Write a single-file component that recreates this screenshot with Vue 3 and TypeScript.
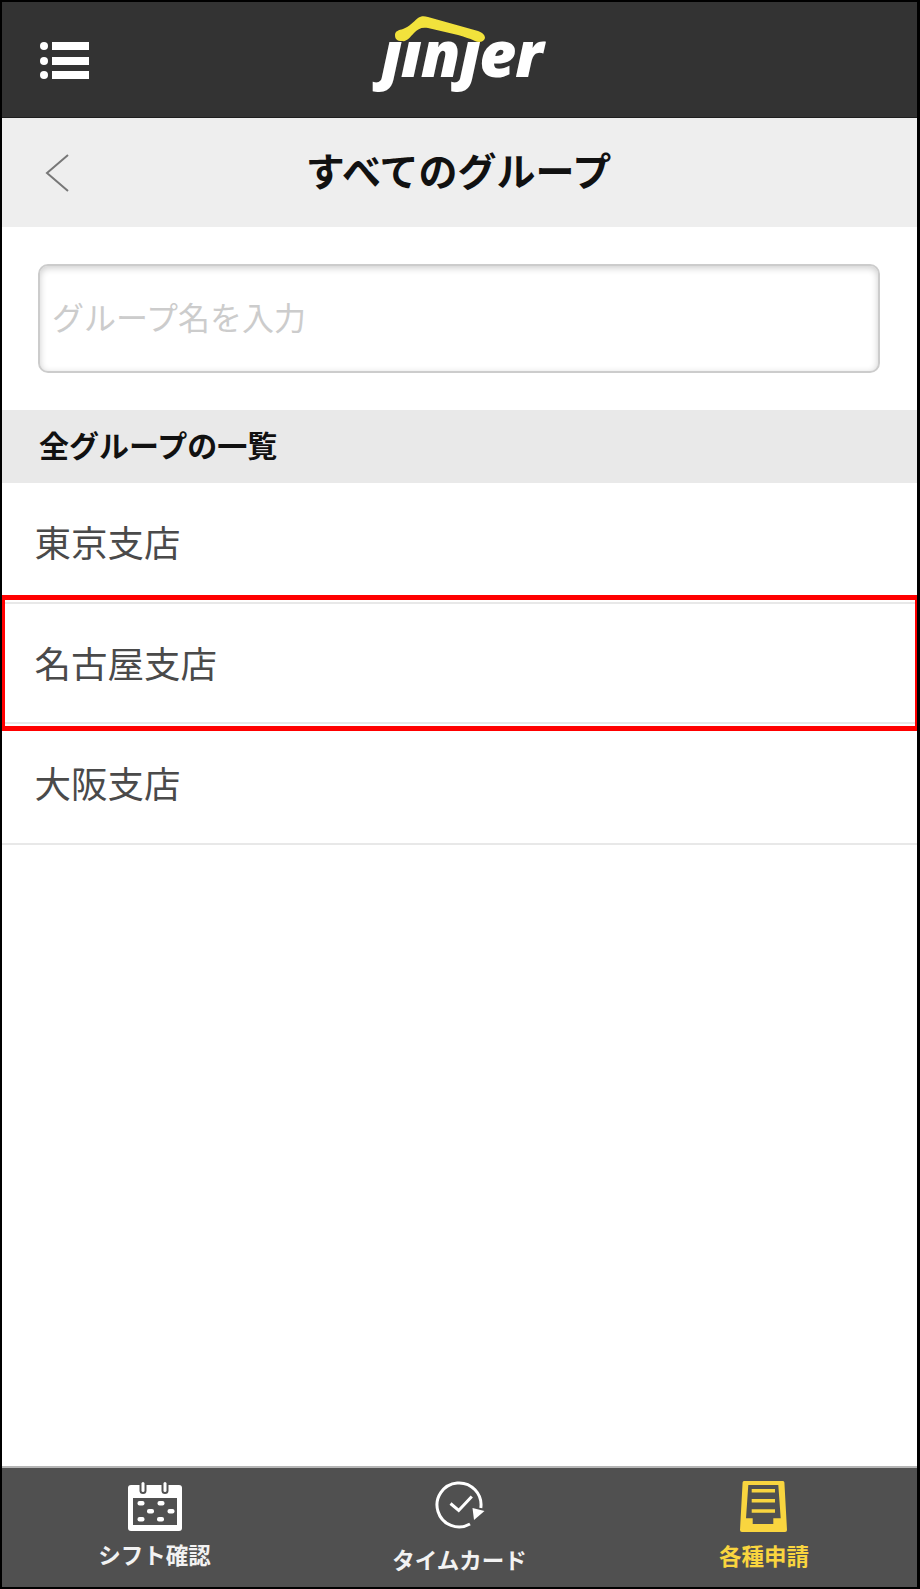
<script setup lang="ts">
const groups: string[] = ['東京支店', '名古屋支店', '大阪支店']
</script>

<template>
  <div class="screen">
    <header class="topbar">
      <div class="menu">
        <div v-for="n in 3" :key="n" class="menu-row"><i class="dot"></i><i class="bar"></i></div>
      </div>
      <div class="logo">
        <svg class="arch" width="92" height="28" viewBox="0 0 92 28">
          <path d="M1 20C1 16 5 15 9 14C15 12 19 7 24 3C27 1 30 1 34 2L84 16C89 18 91 20 91 23C90 27 85 28 81 26C75 23 70 22 64 20L34 13C27 12 24 14 20 18C16 22 13 27 8 26C3 26 1 24 1 20Z" fill="#f2e23c"/>
        </svg>
        <span class="logo-text">ȷınȷer</span>
      </div>
    </header>

    <div class="titlebar">
      <svg class="back" width="26" height="40" viewBox="0 0 26 40">
        <path d="M24 2L3 20L24 38" fill="none" stroke="#777" stroke-width="2"/>
      </svg>
      <h1 class="title">すべてのグループ</h1>
    </div>

    <div class="search">
      <input class="search-input" type="text" placeholder="グループ名を入力" />
    </div>

    <div class="section">全グループの一覧</div>

    <ul class="list">
      <li v-for="g in groups" :key="g" class="row">{{ g }}</li>
    </ul>

    <nav class="tabs">
      <div class="tab">
        <svg width="54" height="50" viewBox="0 0 54 50">
          <rect x="0" y="3" width="54" height="46" rx="3" fill="#fff"/>
          <rect x="5" y="16" width="44" height="27" fill="#505050"/>
          <rect x="11.5" y="0" width="7" height="12" rx="3.5" fill="#505050"/>
          <rect x="33.5" y="0" width="7" height="12" rx="3.5" fill="#505050"/>
          <rect x="13.5" y="0" width="3" height="10" rx="1.5" fill="#fff"/>
          <rect x="35.5" y="0" width="3" height="10" rx="1.5" fill="#fff"/>
          <g fill="#fff">
            <rect x="9.5" y="19" width="7" height="4.5" rx="2"/>
            <rect x="29.5" y="19" width="7" height="4.5" rx="2"/>
            <rect x="19" y="27" width="7" height="4.5" rx="2"/>
            <rect x="39.5" y="27" width="7" height="4.5" rx="2"/>
            <rect x="9.5" y="35" width="7" height="4.5" rx="2"/>
            <rect x="29" y="35" width="7" height="4.5" rx="2"/>
          </g>
        </svg>
        <span class="tab-label">シフト確認</span>
      </div>
      <div class="tab tab-low">
        <svg width="52" height="50" viewBox="0 0 52 50">
          <path d="M36 44A22 22 0 1 1 46.8 28" fill="none" stroke="#fff" stroke-width="3"/>
          <path d="M38.500 28L50.500 31L40 40Z" fill="#fff"/>
          <path d="M16.500 23.500L24.700 30.500L37.800 16.500" fill="none" stroke="#fff" stroke-width="3"/>
        </svg>
        <span class="tab-label">タイムカード</span>
      </div>
      <div class="tab tab-active">
        <svg width="47" height="52" viewBox="0 0 47 52">
          <path fill-rule="evenodd" fill="#f9d53f" d="M4 0H43Q44.300 0 44.400 1.500L47 49Q47 51 45 51H2Q0 51 0 49L2.600 1.500Q2.700 0 4 0ZM8.300 4L6 37.300H12.700V43H33.300V37.300H40.700L38.300 4Z"/>
          <path d="M11.700 9.700H35M11.700 19.700H35M11.700 30H35" stroke="#f9d53f" stroke-width="3.500" fill="none"/>
        </svg>
        <span class="tab-label">各種申請</span>
      </div>
    </nav>

    <div class="highlight"></div>
  </div>
</template>

<style>
html, body { margin: 0; background: #fff; }
</style>

<style scoped>
.screen {
  position: relative;
  width: 920px;
  height: 1589px;
  box-sizing: border-box;
  border: solid #000;
  border-width: 2px 3px 2px 2px;
  display: flex;
  flex-direction: column;
  background: #fff;
  overflow: hidden;
  font-family: "Noto Sans CJK JP", "Noto Sans", sans-serif;
}
.topbar {
  height: 115px;
  flex: none;
  background: #333;
  border-bottom: 1px solid #1e1e1e;
  display: flex;
  align-items: flex-start;
  box-sizing: content-box;
}
.menu {
  margin: 40px 0 0 38px;
  display: flex;
  flex-direction: column;
  gap: 6.500px;
}
.menu-row { display: flex; align-items: center; gap: 4px; height: 8px; }
.dot { width: 8px; height: 8px; border-radius: 50%; background: #fff; }
.bar { width: 37px; height: 8px; background: #fff; }
.logo {
  position: relative;
  margin: 13px 0 0 284px;
  width: 176px;
  height: 80px;
}
.arch { position: absolute; left: 21px; top: 0; }
.logo-text {
  position: absolute;
  left: 8px;
  top: -7px;
  font-family: "Open Sans", sans-serif;
  font-style: italic;
  font-weight: 800;
  font-size: 64px;
  line-height: 90px;
  color: #fff;
  letter-spacing: -1px;
}
.titlebar {
  height: 109px;
  flex: none;
  background: #eee;
  position: relative;
  display: flex;
  align-items: center;
  justify-content: center;
}
.back { position: absolute; left: 42px; top: 35px; }
.title {
  margin: 0 0 6px -2px;
  font-size: 39px;
  font-weight: 700;
  color: #111;
  line-height: 1;
}
.search {
  height: 183px;
  flex: none;
  box-sizing: border-box;
  padding: 37px 37px 37px 36px;
}
.search-input {
  display: block;
  width: 100%;
  height: 109px;
  box-sizing: border-box;
  border: 2.500px solid #ccc;
  border-radius: 10px;
  box-shadow: inset 0 2px 7px rgba(0, 0, 0, 0.2);
  padding: 0 12px 6px;
  font-family: inherit;
  font-size: 32px;
  outline: none;
  background: #fff;
}
.search-input::placeholder { color: #ccc; opacity: 1; }
.section {
  height: 73px;
  flex: none;
  box-sizing: border-box;
  background: #e9e9e9;
  display: flex;
  align-items: center;
  padding: 0 0 6px 37px;
  font-size: 30px;
  font-weight: 700;
  color: #111;
}
.list { list-style: none; margin: 0; padding: 0; flex: 1; }
.row {
  height: 120.500px;
  box-sizing: border-box;
  border-bottom: 2px solid #e8e8e8;
  display: flex;
  align-items: center;
  padding: 0 0 1px 32.500px;
  font-size: 36.500px;
  color: #4a4a4a;
}
.tabs {
  height: 121px;
  flex: none;
  background: #505050;
  border-top: 2px solid #b5b5b5;
  box-sizing: border-box;
  display: grid;
  grid-template-columns: repeat(3, 1fr);
}
.tab {
  display: flex;
  flex-direction: column;
  align-items: center;
  padding-top: 14px;
  color: #f2f2f2;
}
.tab svg { display: block; flex: none; }
.tab-label {
  margin-top: 7px;
  font-size: 22.500px;
  font-weight: 700;
  line-height: 30px;
}
.tab-low { padding-top: 12px; }
.tab-low .tab-label { margin-top: 14px; }
.tab-active { color: #f9d53f; padding-top: 13px; }
.tab-active svg { margin-left: -2px; }
.tab-active .tab-label { margin-top: 7px; margin-left: -1px; }
.highlight {
  position: absolute;
  left: -2px;
  right: -3px;
  top: 593px;
  height: 136px;
  box-sizing: border-box;
  border: 5px solid #f00;
  pointer-events: none;
}
</style>
